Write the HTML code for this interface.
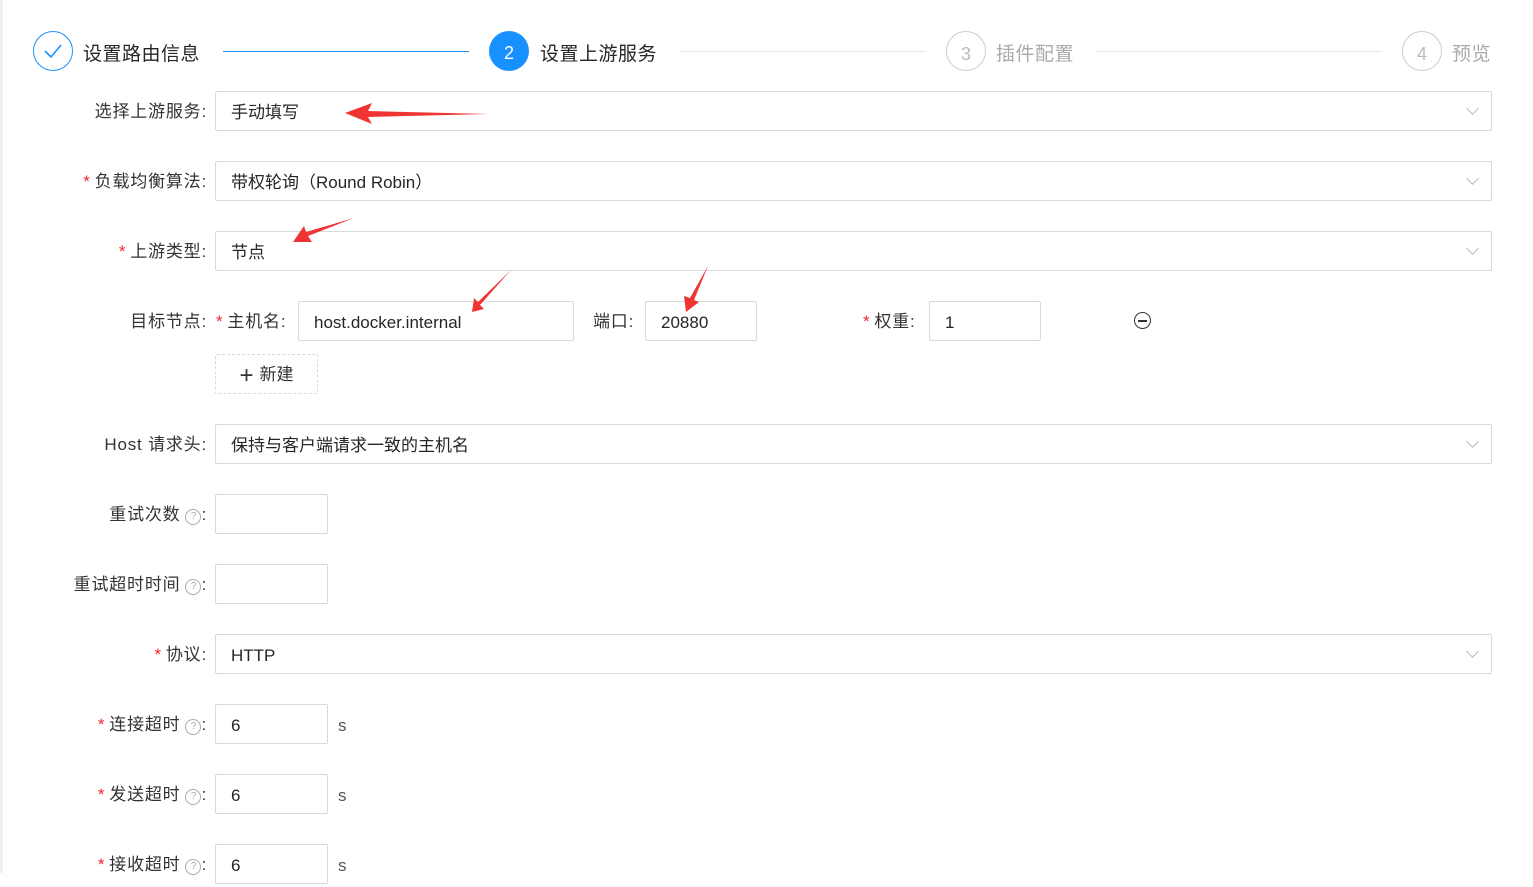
<!DOCTYPE html><html><head><meta charset="utf-8"><style>
body{margin:0;width:1533px;height:873px;overflow:hidden;background:#fff;font-family:"Liberation Sans","Noto Sans CJK SC",sans-serif;font-size:17px;color:#262626;position:relative}
.a{position:absolute}
.lbl{position:absolute;right:1326px;height:40px;line-height:42px;white-space:nowrap;color:#333;letter-spacing:0.8px}
.st{color:#f5222d;margin-right:4px}
.in{position:absolute;height:38px;border:1px solid #d9d9d9;border-radius:2px;line-height:42px;padding-left:15px;box-sizing:content-box;background:#fff}
.sel{left:215px;width:1260px}
.ch{position:absolute;right:14px;top:12px;width:8px;height:8px;border-right:1px solid #bbb;border-bottom:1px solid #bbb;transform:rotate(45deg)}
.q{display:inline-block;width:14px;height:14px;border:1px solid #aaa;border-radius:50%;font-size:10px;line-height:14px;text-align:center;color:#aaa;vertical-align:1px;margin-left:5px;letter-spacing:0}
.s{position:absolute;left:338px;line-height:42px;color:#555}
</style></head><body>
<div class="a" style="left:0;top:0;width:3px;height:873px;background:#f0f2f5"></div>
<div class="a" style="left:33px;top:31px;width:38px;height:38px;border:1px solid #1890ff;border-radius:50%"></div>
<svg class="a" style="left:43px;top:42px" width="20" height="18"><path d="M2 9 L8 15 L18 3" fill="none" stroke="#1890ff" stroke-width="1.6"/></svg>
<div class="a" style="left:83px;top:39px;font-size:19px;color:#262626;letter-spacing:0.5px">设置路由信息</div>
<div class="a" style="left:223px;top:51px;width:246px;height:1px;background:#1890ff"></div>
<div class="a" style="left:489px;top:31px;width:40px;height:40px;border-radius:50%;background:#1890ff;color:#fff;text-align:center;line-height:44px;font-size:18px">2</div>
<div class="a" style="left:540px;top:39px;font-size:19px;letter-spacing:0.5px">设置上游服务</div>
<div class="a" style="left:680px;top:51px;width:246px;height:1px;background:#e8e8e8"></div>
<div class="a" style="left:946px;top:31px;width:38px;height:38px;border:1px solid #ccc;border-radius:50%;color:#bbb;text-align:center;line-height:44px;font-size:18px">3</div>
<div class="a" style="left:996px;top:39px;font-size:19px;color:#aaa;letter-spacing:0.5px">插件配置</div>
<div class="a" style="left:1096px;top:51px;width:286px;height:1px;background:#e8e8e8"></div>
<div class="a" style="left:1402px;top:31px;width:38px;height:38px;border:1px solid #ccc;border-radius:50%;color:#bbb;text-align:center;line-height:44px;font-size:18px">4</div>
<div class="a" style="left:1452px;top:39px;font-size:19px;color:#aaa;letter-spacing:0.5px">预览</div>

<div class="lbl" style="top:91px">选择上游服务:</div>
<div class="in sel" style="top:91px">手动填写<i class="ch"></i></div>
<div class="lbl" style="top:161px"><span class="st">*</span>负载均衡算法:</div>
<div class="in sel" style="top:161px">带权轮询（Round Robin）<i class="ch"></i></div>
<div class="lbl" style="top:231px"><span class="st">*</span>上游类型:</div>
<div class="in sel" style="top:231px">节点<i class="ch"></i></div>

<div class="lbl" style="top:301px">目标节点:</div>
<div class="a" style="left:216px;top:301px;line-height:42px;color:#333;letter-spacing:0.8px"><span class="st">*</span>主机名:</div>
<div class="in" style="left:298px;top:301px;width:259px">host.docker.internal</div>
<div class="a" style="left:593px;top:301px;line-height:42px;color:#333;letter-spacing:0.8px">端口:</div>
<div class="in" style="left:645px;top:301px;width:95px">20880</div>
<div class="a" style="left:863px;top:301px;line-height:42px;color:#333;letter-spacing:0.8px"><span class="st">*</span>权重:</div>
<div class="in" style="left:929px;top:301px;width:95px">1</div>
<div class="a" style="left:1134px;top:312px;width:15px;height:15px;border:1.5px solid #333;border-radius:50%"></div>
<div class="a" style="left:1138px;top:320px;width:9px;height:1.5px;background:#333"></div>
<div class="a" style="left:215px;top:354px;width:101px;height:38px;border:1px dashed #d9d9d9;border-radius:2px;line-height:40px;text-align:center;color:#333"><span style="font-size:24px;vertical-align:-3px;margin-right:6px">+</span>新建</div>

<div class="lbl" style="top:424px">Host 请求头:</div>
<div class="in sel" style="top:424px">保持与客户端请求一致的主机名<i class="ch"></i></div>
<div class="lbl" style="top:494px">重试次数<span class="q">?</span>:</div>
<div class="in" style="left:215px;top:494px;width:96px"></div>
<div class="lbl" style="top:564px">重试超时时间<span class="q">?</span>:</div>
<div class="in" style="left:215px;top:564px;width:96px"></div>
<div class="lbl" style="top:634px"><span class="st">*</span>协议:</div>
<div class="in sel" style="top:634px">HTTP<i class="ch"></i></div>
<div class="lbl" style="top:704px"><span class="st">*</span>连接超时<span class="q">?</span>:</div>
<div class="in" style="left:215px;top:704px;width:96px">6</div><div class="s" style="top:705px">s</div>
<div class="lbl" style="top:774px"><span class="st">*</span>发送超时<span class="q">?</span>:</div>
<div class="in" style="left:215px;top:774px;width:96px">6</div><div class="s" style="top:775px">s</div>
<div class="lbl" style="top:844px"><span class="st">*</span>接收超时<span class="q">?</span>:</div>
<div class="in" style="left:215px;top:844px;width:96px">6</div><div class="s" style="top:845px">s</div>

<svg class="a" style="left:0;top:0" width="1533" height="873">
<g fill="#f03434">
<polygon points="345,113 372,103 368,111 488,114 368,117 372,124"/>
<polygon points="293,242 304,226 306,232 354,218 308,236 312,242"/>
<polygon points="472,312 474,298 478,302 511,270 480,305 484,309"/>
<polygon points="686,312 684,296 690,298 708,266 694,300 699,302"/>
</g></svg>
</body></html>
